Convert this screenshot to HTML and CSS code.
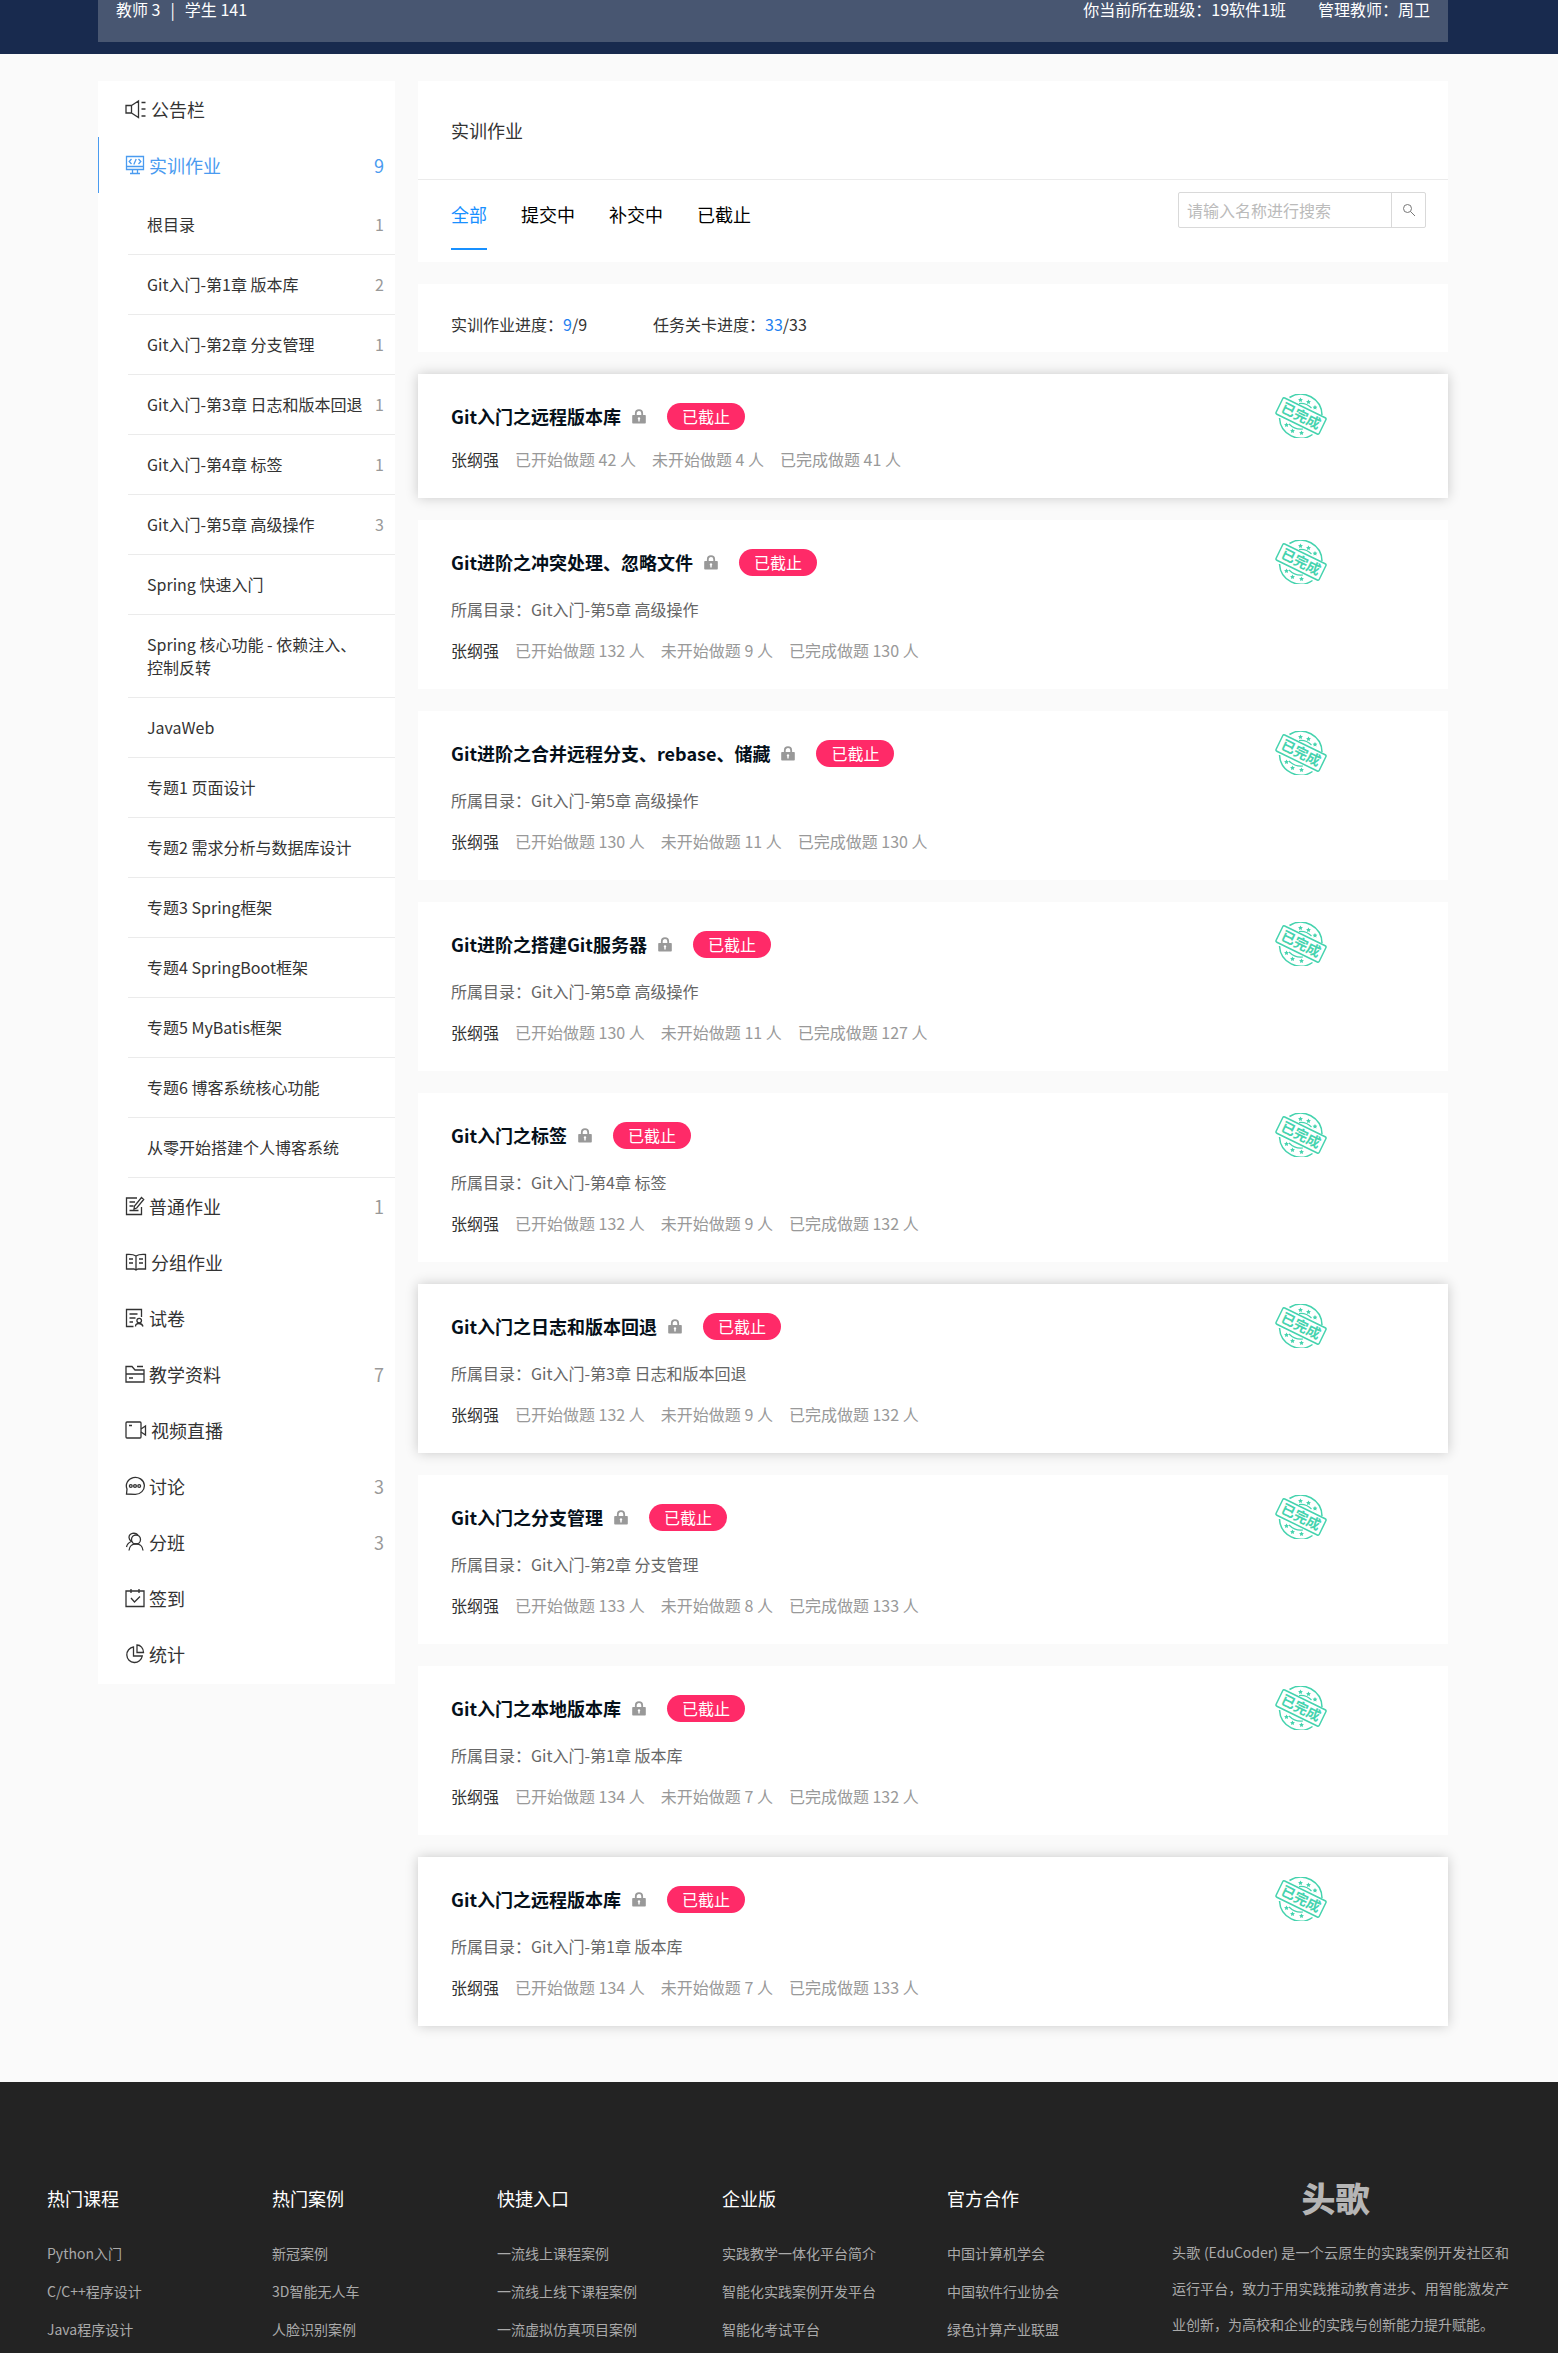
FILE: index.html
```html
<!DOCTYPE html>
<html lang="zh-CN">
<head>
<meta charset="utf-8">
<meta name="viewport" content="width=device-width, initial-scale=1">
<title>实训作业</title>
<link rel="stylesheet" href="styles.css">
</head>
<body>
<svg class="sprite" aria-hidden="true">
  <symbol id="i-lock" viewBox="0 0 14 15"><path d="M3.8 6.5V4.400a3.200 3.200 0 0 1 6.400 0v2.100" fill="none" stroke="currentColor" stroke-width="1.800"/><path fill="currentColor" fill-rule="evenodd" d="M1 6h12a.8.8 0 0 1 .8.8v6.900a.8.8 0 0 1-.8.8H1a.8.8 0 0 1-.8-.8V6.800A.8.8 0 0 1 1 6zm6 2.300a1.200 1.200 0 0 0-.7 2.200V12.500h1.400v-2a1.200 1.200 0 0 0-.7-2.200z"/></symbol>
  <symbol id="i-stamp" viewBox="0 0 52 44">
    <g fill="none" stroke="#45d3ae" stroke-width="1.500">
      <path d="M14.500 3.500A21.200 21.200 0 0 1 47 21"/>
      <path d="M4.500 24A21.200 21.200 0 0 0 37.500 40.500"/>
      <path d="M24 9.500Q31 8.500 36.500 14M14 30Q20 36 28 35" stroke-width="1.200"/>
      <rect x="2" y="13" width="48" height="18" rx="1.500" transform="rotate(26 26 22)"/>
    </g>
    <g fill="#45d3ae"><path id="s" d="M25.500 3.500l.8 1.500 1.600.3-1.200 1.200.3 1.600-1.500-.8-1.500.8.3-1.600-1.200-1.200 1.600-.3z"/><use href="#s" x="8" y="2"/><use href="#s" x="14.500" y="7.500"/><use href="#s" x="-14" y="25"/><use href="#s" x="-8" y="31"/><use href="#s" x="1" y="33"/></g>
    <text x="26" y="27" text-anchor="middle" transform="rotate(26 26 22)" class="stamp-text">已完成</text>
  </symbol>
</svg>

<header class="banner">
  <div class="banner-bar">
    <div class="banner-counts"><span>教师 3</span><span>|</span><span>学生 141</span></div>
    <div class="banner-class"><span>你当前所在班级：19软件1班</span><span>管理教师：周卫</span></div>
  </div>
</header>

<div class="page">
  <nav class="sidebar">
    <a class="item" href="#"><svg class="icon wide" viewBox="0 0 22 20"><path d="M1 6.500h5.500v7.500H1zM6.500 6.500l7-4.500v16.500l-7-4.500M16.500 3.500h4M16.500 10h4M16.500 17h4"/></svg>公告栏</a>
    <a class="item active" href="#"><svg class="icon" viewBox="0 0 20 20"><path d="M1.500 1.500h17v13h-17zM1.500 11.500h17M7.500 14.500v4M12.500 14.500v4M5 18.500h10M6.500 4L4.200 6.500 6.500 9M13.500 4l2.300 2.500L13.500 9M11.200 4L8.800 9.500"/></svg>实训作业<span class="count">9</span></a>
    <div class="submenu">
      <a href="#">根目录<span class="count">1</span></a>
      <a href="#">Git入门-第1章 版本库<span class="count">2</span></a>
      <a href="#">Git入门-第2章 分支管理<span class="count">1</span></a>
      <a href="#">Git入门-第3章 日志和版本回退<span class="count">1</span></a>
      <a href="#">Git入门-第4章 标签<span class="count">1</span></a>
      <a href="#">Git入门-第5章 高级操作<span class="count">3</span></a>
      <a href="#">Spring 快速入门</a>
      <a href="#">Spring 核心功能 - 依赖注入、<br>控制反转</a>
      <a href="#">JavaWeb</a>
      <a href="#">专题1 页面设计</a>
      <a href="#">专题2 需求分析与数据库设计</a>
      <a href="#">专题3 Spring框架</a>
      <a href="#">专题4 SpringBoot框架</a>
      <a href="#">专题5 MyBatis框架</a>
      <a href="#">专题6 博客系统核心功能</a>
      <a href="#">从零开始搭建个人博客系统</a>
    </div>
    <a class="item" href="#"><svg class="icon" viewBox="0 0 20 20"><path d="M12 2H1.500v16.500h15V11M4.500 6H10M4.500 10h4M4.500 14.500h9M16.500 1.500l2.200 2-7 8.500-2.700 1 .5-3z"/></svg>普通作业<span class="count">1</span></a>
    <a class="item" href="#"><svg class="icon wide" viewBox="0 0 22 20"><path d="M11 4Q8 2 1.500 2.500v14.500H9l2 1 2-1h7.500V2.500Q14 2 11 4zM11 4v14M4 7h4M4 11h4M14 7h4M14 11h4"/></svg>分组作业</a>
    <a class="item" href="#"><svg class="icon" viewBox="0 0 20 20"><path d="M8.500 18.500h-7v-17h15V9M4.500 6h8M4.500 10h6M4.500 14H8M10.500 18.500c0-4 6.500-4 7.500 0"/><circle cx="14.200" cy="12.600" r="2.300"/></svg>试卷</a>
    <a class="item" href="#"><svg class="icon" viewBox="0 0 20 20"><path d="M1 18V2.500h6l3 3.500h9v12zM12 2.500h6M1 10h18M4 14h4"/></svg>教学资料<span class="count">7</span></a>
    <a class="item" href="#"><svg class="icon wide" viewBox="0 0 22 20"><rect x="1" y="2" width="15" height="16" rx="1"/><path d="M16 9l4.500-3v9L16 12M4 5.500h3"/></svg>视频直播</a>
    <a class="item" href="#"><svg class="icon" viewBox="0 0 20 20"><path d="M1.500 18l.5-5A9 8.500 0 1 1 10 18.300z"/><circle cx="5.800" cy="10" r="1.400"/><circle cx="10" cy="10" r="1.400"/><circle cx="14.200" cy="10" r="1.400"/></svg>讨论<span class="count">3</span></a>
    <a class="item" href="#"><svg class="icon" viewBox="0 0 20 20"><circle cx="11" cy="7.500" r="4.500"/><path d="M4 18.500c.5-9 13.500-9 14 0M13 3C10 0 4 1 4 5.500c0 2 1 3 2.500 4-3 1-4.500 3-5 5.500"/></svg>分班<span class="count">3</span></a>
    <a class="item" href="#"><svg class="icon" viewBox="0 0 20 20"><path d="M1 3h18v15.500H1zM6 1v4M14 1v4M6 10l3.500 4 5.500-5.500"/></svg>签到</a>
    <a class="item" href="#"><svg class="icon" viewBox="0 0 20 20"><path d="M8.500 3a7.800 7.800 0 1 0 8.800 9H8.500zM12 1v7.500h6.500C18.500 4 15.500 1 12 1z"/></svg>统计</a>
  </nav>

  <main class="main">
    <section class="panel heading">
      <h1>实训作业</h1>
      <div class="toolbar">
        <div class="tabs">
          <a class="on" href="#">全部</a><a href="#">提交中</a><a href="#">补交中</a><a href="#">已截止</a>
        </div>
        <form class="search">
          <input type="text" placeholder="请输入名称进行搜索" aria-label="搜索">
          <button type="button" aria-label="搜索"><svg viewBox="0 0 14 14"><circle cx="5.500" cy="5.500" r="4"/><path d="M8.500 8.500l4.500 4.500"/></svg></button>
        </form>
      </div>
    </section>

    <section class="panel progress">
      <span>实训作业进度：<b>9</b>/9</span>
      <span>任务关卡进度：<b>33</b>/33</span>
    </section>

    <article class="panel task raised">
      <div class="title"><h2>Git入门之远程版本库</h2><svg class="lock"><use href="#i-lock"/></svg><span class="badge">已截止</span></div>
      <div class="stats"><strong>张纲强</strong><span>已开始做题 42 人</span><span>未开始做题 4 人</span><span>已完成做题 41 人</span></div>
      <svg class="stamp" role="img" aria-label="已完成"><use href="#i-stamp"/></svg>
    </article>
    <article class="panel task">
      <div class="title"><h2>Git进阶之冲突处理、忽略文件</h2><svg class="lock"><use href="#i-lock"/></svg><span class="badge">已截止</span></div>
      <p>所属目录：Git入门-第5章 高级操作</p>
      <div class="stats"><strong>张纲强</strong><span>已开始做题 132 人</span><span>未开始做题 9 人</span><span>已完成做题 130 人</span></div>
      <svg class="stamp" role="img" aria-label="已完成"><use href="#i-stamp"/></svg>
    </article>
    <article class="panel task">
      <div class="title"><h2>Git进阶之合并远程分支、rebase、储藏</h2><svg class="lock"><use href="#i-lock"/></svg><span class="badge">已截止</span></div>
      <p>所属目录：Git入门-第5章 高级操作</p>
      <div class="stats"><strong>张纲强</strong><span>已开始做题 130 人</span><span>未开始做题 11 人</span><span>已完成做题 130 人</span></div>
      <svg class="stamp" role="img" aria-label="已完成"><use href="#i-stamp"/></svg>
    </article>
    <article class="panel task">
      <div class="title"><h2>Git进阶之搭建Git服务器</h2><svg class="lock"><use href="#i-lock"/></svg><span class="badge">已截止</span></div>
      <p>所属目录：Git入门-第5章 高级操作</p>
      <div class="stats"><strong>张纲强</strong><span>已开始做题 130 人</span><span>未开始做题 11 人</span><span>已完成做题 127 人</span></div>
      <svg class="stamp" role="img" aria-label="已完成"><use href="#i-stamp"/></svg>
    </article>
    <article class="panel task">
      <div class="title"><h2>Git入门之标签</h2><svg class="lock"><use href="#i-lock"/></svg><span class="badge">已截止</span></div>
      <p>所属目录：Git入门-第4章 标签</p>
      <div class="stats"><strong>张纲强</strong><span>已开始做题 132 人</span><span>未开始做题 9 人</span><span>已完成做题 132 人</span></div>
      <svg class="stamp" role="img" aria-label="已完成"><use href="#i-stamp"/></svg>
    </article>
    <article class="panel task raised">
      <div class="title"><h2>Git入门之日志和版本回退</h2><svg class="lock"><use href="#i-lock"/></svg><span class="badge">已截止</span></div>
      <p>所属目录：Git入门-第3章 日志和版本回退</p>
      <div class="stats"><strong>张纲强</strong><span>已开始做题 132 人</span><span>未开始做题 9 人</span><span>已完成做题 132 人</span></div>
      <svg class="stamp" role="img" aria-label="已完成"><use href="#i-stamp"/></svg>
    </article>
    <article class="panel task">
      <div class="title"><h2>Git入门之分支管理</h2><svg class="lock"><use href="#i-lock"/></svg><span class="badge">已截止</span></div>
      <p>所属目录：Git入门-第2章 分支管理</p>
      <div class="stats"><strong>张纲强</strong><span>已开始做题 133 人</span><span>未开始做题 8 人</span><span>已完成做题 133 人</span></div>
      <svg class="stamp" role="img" aria-label="已完成"><use href="#i-stamp"/></svg>
    </article>
    <article class="panel task">
      <div class="title"><h2>Git入门之本地版本库</h2><svg class="lock"><use href="#i-lock"/></svg><span class="badge">已截止</span></div>
      <p>所属目录：Git入门-第1章 版本库</p>
      <div class="stats"><strong>张纲强</strong><span>已开始做题 134 人</span><span>未开始做题 7 人</span><span>已完成做题 132 人</span></div>
      <svg class="stamp" role="img" aria-label="已完成"><use href="#i-stamp"/></svg>
    </article>
    <article class="panel task raised">
      <div class="title"><h2>Git入门之远程版本库</h2><svg class="lock"><use href="#i-lock"/></svg><span class="badge">已截止</span></div>
      <p>所属目录：Git入门-第1章 版本库</p>
      <div class="stats"><strong>张纲强</strong><span>已开始做题 134 人</span><span>未开始做题 7 人</span><span>已完成做题 133 人</span></div>
      <svg class="stamp" role="img" aria-label="已完成"><use href="#i-stamp"/></svg>
    </article>
  </main>
</div>

<footer class="footer">
  <div class="col"><h3>热门课程</h3><a href="#">Python入门</a><a href="#">C/C++程序设计</a><a href="#">Java程序设计</a></div>
  <div class="col"><h3>热门案例</h3><a href="#">新冠案例</a><a href="#">3D智能无人车</a><a href="#">人脸识别案例</a></div>
  <div class="col"><h3>快捷入口</h3><a href="#">一流线上课程案例</a><a href="#">一流线上线下课程案例</a><a href="#">一流虚拟仿真项目案例</a></div>
  <div class="col"><h3>企业版</h3><a href="#">实践教学一体化平台简介</a><a href="#">智能化实践案例开发平台</a><a href="#">智能化考试平台</a></div>
  <div class="col"><h3>官方合作</h3><a href="#">中国计算机学会</a><a href="#">中国软件行业协会</a><a href="#">绿色计算产业联盟</a></div>
  <div class="about"><div class="logo">头歌</div><p>头歌 (EduCoder) 是一个云原生的实践案例开发社区和运行平台，致力于用实践推动教育进步、用智能激发产业创新，为高校和企业的实践与创新能力提升赋能。</p></div>
</footer>
</body>
</html>
```
FILE: styles.css
```css
* { box-sizing: border-box; }

body {
  margin: 0;
  min-height: 100vh;
  display: flex;
  flex-direction: column;
  background: #fafafa;
  color: #333;
  font: 16px/24px "Noto Sans CJK SC", sans-serif;
}

a { color: inherit; text-decoration: none; }
h1, h2, h3, p { margin: 0; font-weight: inherit; }
.sprite { display: none; }

.banner {
  background: #182a4e;
  padding: 0 110px 12px 98px;
}
.banner-bar {
  display: flex;
  justify-content: space-between;
  padding: 0 18px 24px;
  line-height: 18px;
  background: #485671;
  color: #fff;
}
.banner-counts { display: flex; gap: 10px; }
.banner-class { display: flex; gap: 32px; }

.page {
  display: flex;
  align-items: flex-start;
  gap: 23px;
  padding: 27px 110px 56px 98px;
}

.sidebar {
  flex: 0 0 297px;
  padding-bottom: 2px;
  background: #fff;
}
.item {
  display: flex;
  align-items: center;
  gap: 4px;
  height: 56px;
  padding: 0 11px 0 26px;
  border-left: 1px solid transparent;
  font-size: 18px;
}
.item.active { color: #4a9bf0; border-color: #4a9bf0; }
.item.active .count { color: inherit; }
.count { margin-left: auto; color: #999; }
.icon {
  width: 20px;
  height: 20px;
  fill: none;
  stroke: currentColor;
  stroke-width: 1.3px;
}
.icon.wide { width: 22px; }

.submenu { margin: 2px 0 0 30px; }
.submenu a {
  display: flex;
  align-items: center;
  padding: 18px 11px 18px 19px;
  border-bottom: 1px solid #ebebeb;
  line-height: 23px;
}

.main {
  flex: 1;
  min-width: 0;
  display: flex;
  flex-direction: column;
  gap: 22px;
}
.panel { background: #fff; }

.heading h1 {
  padding: 36px 33px;
  border-bottom: 1px solid #ebebeb;
  font-size: 18px;
  line-height: 26px;
}
.toolbar {
  display: flex;
  justify-content: space-between;
  align-items: flex-start;
  padding: 12px 22px 12px 33px;
}
.tabs {
  display: flex;
  gap: 34px;
  color: #000;
  font-size: 18px;
}
.tabs a {
  padding: 10px 0 22px;
  border-bottom: 2px solid transparent;
}
.tabs .on { color: #1890ff; border-color: #1890ff; }

.search {
  display: flex;
  height: 36px;
  border: 1px solid #d9d9d9;
  border-radius: 2px;
}
.search input {
  width: 212px;
  padding: 0 8px;
  border: 0;
  background: none;
  font: inherit;
}
.search input::placeholder { color: #bbb; }
.search button {
  width: 34px;
  padding: 0;
  border: 0;
  border-left: 1px solid #d9d9d9;
  background: none;
}
.search svg {
  display: block;
  width: 14px;
  height: 14px;
  margin: 0 auto;
  fill: none;
  stroke: #777;
}

.progress {
  display: flex;
  gap: 66px;
  padding: 28px 33px 16px;
}
.progress b { color: #1f80f0; font-weight: inherit; }

.task {
  position: relative;
  display: flex;
  flex-direction: column;
  gap: 17px;
  padding: 28px 33px 27px;
}
.raised { box-shadow: 0 0 12px rgba(0, 0, 0, .2); }
.title { display: flex; align-items: center; }
.title h2 {
  color: #05101a;
  font-size: 18px;
  font-weight: 700;
  line-height: 28px;
}
.lock { width: 14px; height: 15px; margin: 0 21px 0 11px; color: #999; }
.badge {
  padding: 0 15px;
  border-radius: 14px;
  background: #ff2a68;
  color: #fff;
  line-height: 27px;
}
.task p { margin-top: 4px; color: #666; }
.stats { display: flex; gap: 16px; color: #999; }
.stats strong { color: #333; font-weight: inherit; }
.stamp {
  position: absolute;
  top: 20px;
  right: 121px;
  width: 52px;
  height: 44px;
}
.stamp-text {
  fill: #45d3ae;
  font-size: 14px;
  font-weight: 700;
}

.footer {
  flex: 1;
  display: grid;
  grid-template-columns: repeat(5, 1fr) 337px;
  padding: 96px 49px 3px 47px;
  background: #232323;
}
.col { display: flex; flex-direction: column; }
.col h3 {
  margin-bottom: 16px;
  color: #fff;
  font-size: 18px;
  line-height: 40px;
}
.col a { color: #aaa; font-size: 14px; line-height: 38px; }
.about { text-align: justify; color: #aaa; }
.about p { font-size: 14px; line-height: 36px; }
.logo {
  max-width: 327px;
  margin-bottom: 16px;
  color: #b5b5b5;
  text-align: center;
  font-size: 34px;
  font-weight: 900;
  line-height: 40px;
}
```
